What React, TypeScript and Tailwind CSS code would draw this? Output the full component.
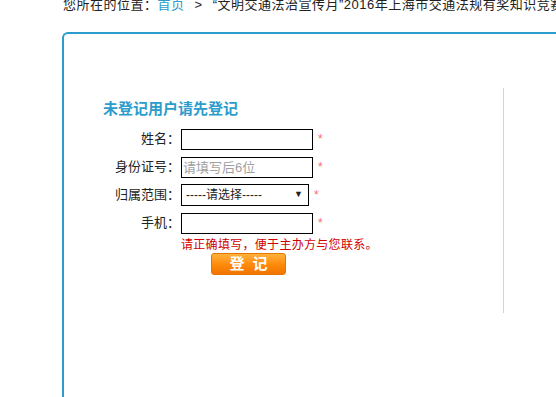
import React from "react"

const font = { fontFamily: '"Liberation Sans", "Noto Sans CJK SC", sans-serif' }

export default function App() {
  return (
    <div className="w-[556px] h-[397px] overflow-hidden bg-white text-[#222]" style={font}>
      {/* 面包屑 */}
      <div className="-mt-[2px] pl-[63px] h-[16px] leading-[14px] text-[13px] tracking-[0.5px] whitespace-nowrap">
        您所在的位置：<span className="text-[#2b9ccb]">首页</span>
        <span className="mx-[10px]">&gt;</span>
        “文明交通法治宣传月”2016年上海市交通法规有奖知识竞赛
      </div>

      {/* 主框 */}
      <div className="mt-[18px] ml-[62px] w-[620px] h-[420px] border-2 border-r-0 border-b-0 border-[#2b9ccb] rounded-tl-[6px] pt-[54px]">
        <div className="w-[440px] h-[225px] border-r border-[#d4d4d4] pl-[39px] pt-[11px]">
          <div className="h-[20px] leading-[20px] text-[15px] font-bold text-[#2b9ccb]">
            未登记用户请先登记
          </div>

          <div className="mt-[9px] flex flex-col gap-[6px] text-[13px]">
            <div className="flex items-center h-[22px]">
              <label className="w-[77px] -mr-[3px] text-right">姓名：</label>
              <input className="ml-[4px] w-[132px] h-[21px] border border-black outline-none px-[2px] text-[13px]" />
              <span className="ml-[5px] text-[#ff6a6a] text-[12px]">*</span>
            </div>
            <div className="flex items-center h-[22px]">
              <label className="w-[77px] -mr-[3px] text-right">身份证号：</label>
              <input
                placeholder="请填写后6位"
                className="ml-[4px] w-[132px] h-[21px] border border-black outline-none px-[1px] text-[13px] placeholder:text-[#a0a0a0]"
              />
              <span className="ml-[5px] text-[#ff6a6a] text-[12px]">*</span>
            </div>
            <div className="flex items-center h-[22px]">
              <label className="w-[77px] -mr-[3px] text-right">归属范围：</label>
              <div className="relative ml-[4px]">
                <select className="appearance-none w-[128px] h-[22px] border border-black bg-white rounded-none pl-[4px] text-[12px] outline-none">
                  <option>-----请选择-----</option>
                </select>
                <span className="absolute right-[6px] top-[4px] text-[9px] pointer-events-none">▼</span>
              </div>
              <span className="ml-[5px] text-[#ff6a6a] text-[12px]">*</span>
            </div>
            <div className="flex items-center h-[22px]">
              <label className="w-[77px] -mr-[3px] text-right">手机：</label>
              <input className="ml-[4px] w-[132px] h-[21px] border border-black outline-none px-[2px] text-[13px]" />
              <span className="ml-[5px] text-[#ff6a6a] text-[12px]">*</span>
            </div>
          </div>

          <div className="mt-[4px] ml-[78px] h-[14px] leading-[14px] text-[12px] tracking-[0.3px] text-[#d00000]">
            请正确填写，便于主办方与您联系。
          </div>

          <button className="ml-[108px] w-[75px] h-[22px] rounded-[3px] border border-[#e87400] bg-gradient-to-b from-[#ffb23a] via-[#ff8c0a] to-[#f07400] text-white font-bold text-[15px] leading-[20px] tracking-[8px] pl-[8px]">
            登记
          </button>
        </div>
      </div>
    </div>
  )
}
